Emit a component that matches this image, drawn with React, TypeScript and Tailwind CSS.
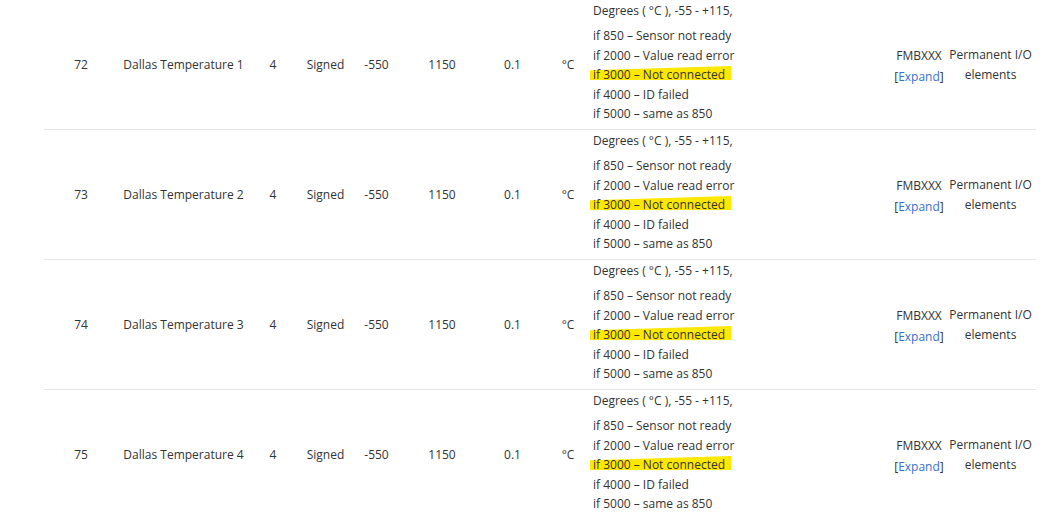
const rows = [
  { id: 72, name: 'Dallas Temperature 1' },
  { id: 73, name: 'Dallas Temperature 2' },
  { id: 74, name: 'Dallas Temperature 3' },
  { id: 75, name: 'Dallas Temperature 4' },
]

function Row({ id, name }: { id: number; name: string }) {
  return (
    <div className="flex h-[130px] border-b border-[#e6e6e6]">
      <div className="w-[74px] flex items-center justify-center">{id}</div>
      <div className="w-[131px] flex items-center justify-center">{name}</div>
      <div className="w-[48px] flex items-center justify-center">4</div>
      <div className="w-[57px] flex items-center justify-center">Signed</div>
      <div className="w-[45px] flex items-center justify-center">-550</div>
      <div className="w-[86px] flex items-center justify-center">1150</div>
      <div className="w-[55px] flex items-center justify-center">0.1</div>
      <div className="w-[48px] flex items-center justify-center pl-2">°C</div>

      {/* Description */}
      <div className="w-[305px] pl-[5px] pt-[1px]">
        <div className="leading-[20px] mb-[5px]">Degrees ( °C ), -55 - +115,</div>
        <div className="leading-[19.5px]">
          <div>if 850 – Sensor not ready</div>
          <div>if 2000 – Value read error</div>
          <div>
            <span className="relative">
              <span className="absolute -left-[3px] -right-[6px] top-0 bottom-[3px] bg-[#ffe800] [clip-path:polygon(0_30%,100%_0,100%_100%,0_100%)]" />
              <span className="relative">if 3000 – Not connected</span>
            </span>
          </div>
          <div>if 4000 – ID failed</div>
          <div>if 5000 – same as 850</div>
        </div>
      </div>

      <div className="w-[52px] flex items-center justify-center">
        <div className="pt-[4px] text-center">
          <div className="leading-[19.5px]">FMBXXX</div>
          <div className="leading-[19.5px] mt-[1.5px]">
            [<span className="text-[#3a6fcc]">Expand</span>]
          </div>
        </div>
      </div>
      <div className="w-[91px] flex items-center justify-center text-center leading-[19.5px]">
        Permanent I/O elements
      </div>
    </div>
  )
}

export default function App() {
  return (
    <div className="w-[1051px] h-[517px] bg-white overflow-hidden text-[12px] text-[#333] font-['Open_Sans',sans-serif]">
      <div className="ml-[44px] w-[992px]">
        {rows.map((r) => (
          <Row key={r.id} id={r.id} name={r.name} />
        ))}
      </div>
    </div>
  )
}
